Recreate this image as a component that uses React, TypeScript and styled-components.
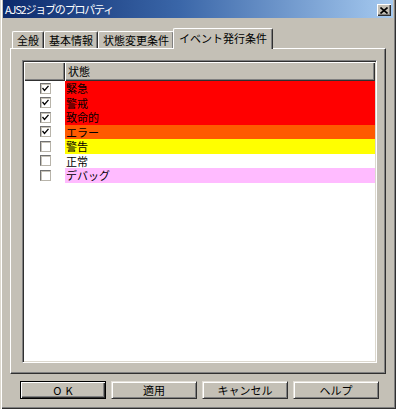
import styled, { createGlobalStyle } from "styled-components";

const GlobalStyle = createGlobalStyle`
    html, body {
        margin: 0;
        padding: 0;
        background: #c4c0b6;
    }
    * {
        box-sizing: border-box;
    }
`

const FONT = `"Noto Sans CJK JP", "Liberation Sans", sans-serif`

const Window = styled.div`
    width: 396px;
    height: 409px;
    background: #c4c0b6;
    display: flex;
    flex-direction: column;
    padding: 0 3px 3px 3px;
    box-shadow: inset 1px 0 0 #dcd8ce, inset 2px 0 0 #ffffff,
        inset -1px -1px 0 #303030, inset -2px -2px 0 #808080;
    font-family: ${FONT};
    color: #000;
`

const TitleBar = styled.div`
    height: 18px;
    display: flex;
    align-items: center;
    justify-content: space-between;
    padding: 0 2px 0 2px;
    background: linear-gradient(to right, #0c2a6c 0%, #3a66a8 45%, #a6caf0 100%);
`

const TitleText = styled.span`
    color: #fff;
    font-size: 11px;
    letter-spacing: -1.2px;
    line-height: 18px;
    white-space: nowrap;
`

const CloseButton = styled.div`
    width: 14px;
    height: 12px;
    margin-top: 2px;
    background: #c4c0b6;
    display: flex;
    align-items: center;
    justify-content: center;
    box-shadow: inset 1px 1px 0 #fff, inset -1px -1px 0 #303030, inset -2px -2px 0 #808080;
`

const Body = styled.div`
    flex: 1;
    display: flex;
    flex-direction: column;
    padding: 10px 7px 0 7px;
`

const TabStrip = styled.div`
    height: 20px;
    display: flex;
    align-items: flex-end;
    padding-left: 2px;
    position: relative;
    z-index: 1;
`

const Tab = styled.div<{ $active?: boolean }>`
    height: ${p => (p.$active ? "21px" : "17px")};
    margin: ${p => (p.$active ? "0 -1px -1px -1px" : "0")};
    padding: ${p => (p.$active ? "1px 5px 0 5px" : "0 4px")};
    font-size: 11px;
    line-height: 16px;
    white-space: nowrap;
    background: #c4c0b6;
    border-top: 1px solid #fff;
    border-left: 1px solid #fff;
    border-right: 1px solid #303030;
    border-radius: 2px 2px 0 0;
    box-shadow: inset -1px 0 0 #808080;
`

const Panel = styled.div`
    height: 326px;
    display: flex;
    flex-direction: column;
    padding: 11px 8px 10px 11px;
    border-top: 1px solid #fff;
    border-left: 1px solid #fff;
    border-right: 1px solid #303030;
    border-bottom: 1px solid #303030;
    box-shadow: inset -1px -1px 0 #808080;
`

const ListView = styled.div`
    flex: 1;
    background: #fff;
    border-top: 1px solid #808080;
    border-left: 1px solid #808080;
    border-right: 1px solid #fff;
    border-bottom: 1px solid #fff;
    box-shadow: inset 1px 1px 0 #303030, inset -1px -1px 0 #dcd8ce;
    padding: 1px 1px 0 1px;
    overflow: hidden;
`

const HeaderRow = styled.div`
    display: flex;
    height: 19px;
`

const HeaderCell = styled.div<{ $w?: number }>`
    ${p => (p.$w ? `width: ${p.$w}px;` : "flex: 1;")}
    height: 19px;
    background: #c4c0b6;
    font-size: 11px;
    line-height: 18px;
    padding-left: 3px;
    box-shadow: inset 1px 1px 0 #fff, inset -1px -1px 0 #303030, inset -2px -2px 0 #808080;
`

const Row = styled.div`
    display: flex;
    height: 14.5px;
`

const CheckCell = styled.div`
    width: 41px;
    display: flex;
    align-items: center;
    justify-content: center;
    padding-left: 1px;
`

const CheckBox = styled.div`
    width: 11px;
    height: 11px;
    background: #fff;
    border: 1px solid #707070;
    border-right-color: #b8b4aa;
    border-bottom-color: #b8b4aa;
    box-shadow: inset 1px 1px 0 #c8c4ba;
    display: flex;
    align-items: center;
    justify-content: center;
`

const StateCell = styled.div<{ $bg: string }>`
    flex: 1;
    background: ${p => p.$bg};
    font-size: 11px;
    line-height: 14.5px;
    padding-left: 1px;
    white-space: nowrap;
`

const ButtonRow = styled.div`
    display: flex;
    gap: 5px;
    padding-left: 10px;
    margin-top: 7px;
`

const Button = styled.div<{ $default?: boolean }>`
    width: 86px;
    height: 18px;
    display: flex;
    align-items: center;
    justify-content: center;
    font-size: 11px;
    letter-spacing: ${p => (p.$default ? "4px" : "0")};
    text-indent: ${p => (p.$default ? "4px" : "0")};
    background: #c4c0b6;
    border: 1px solid ${p => (p.$default ? "#000" : "transparent")};
    box-shadow: ${p =>
        p.$default
            ? "inset 1px 1px 0 #fff, inset -1px -1px 0 #303030, inset -2px -2px 0 #808080"
            : "inset 1px 1px 0 #fff, inset -1px -1px 0 #808080"};
    ${p => (!p.$default ? "border-right-color: #303030; border-bottom-color: #303030; border-top-color: #e4e0d8; border-left-color: #e4e0d8;" : "")}
`

const states = [
    { name: "緊急", color: "#ff0000", checked: true },
    { name: "警戒", color: "#ff0000", checked: true },
    { name: "致命的", color: "#ff0000", checked: true },
    { name: "エラー", color: "#ff5a00", checked: true },
    { name: "警告", color: "#ffff00", checked: false },
    { name: "正常", color: "#ffffff", checked: false },
    { name: "デバッグ", color: "#ffbbff", checked: false },
]

const tabs = ["全般", "基本情報", "状態変更条件", "イベント発行条件"]

const App = (): JSX.Element => {
    return (
        <>
            <GlobalStyle />
            <Window>
                <TitleBar>
                    <TitleText>AJS2ジョブのプロパティ</TitleText>
                    <CloseButton>
                        <svg width="8" height="7" viewBox="0 0 8 7">
                            <path d="M0.5 0.5 L7.5 6.5 M7.5 0.5 L0.5 6.5" stroke="#000" strokeWidth="1.6" />
                        </svg>
                    </CloseButton>
                </TitleBar>
                <Body>
                    <TabStrip>
                        {tabs.map((t, i) => (
                            <Tab key={t} $active={i === tabs.length - 1}>{t}</Tab>
                        ))}
                    </TabStrip>
                    <Panel>
                        <ListView>
                            <HeaderRow>
                                <HeaderCell $w={41} />
                                <HeaderCell>状態</HeaderCell>
                            </HeaderRow>
                            {states.map(s => (
                                <Row key={s.name}>
                                    <CheckCell>
                                        <CheckBox>
                                            {s.checked && (
                                                <svg width="7" height="7" viewBox="0 0 7 7">
                                                    <path d="M0.5 3 L2.5 5.5 L6.5 0.8" stroke="#000" strokeWidth="1.3" fill="none" />
                                                </svg>
                                            )}
                                        </CheckBox>
                                    </CheckCell>
                                    <StateCell $bg={s.color}>{s.name}</StateCell>
                                </Row>
                            ))}
                        </ListView>
                    </Panel>
                    <ButtonRow>
                        <Button $default>OK</Button>
                        <Button>適用</Button>
                        <Button>キャンセル</Button>
                        <Button>ヘルプ</Button>
                    </ButtonRow>
                </Body>
            </Window>
        </>
    )
}

export default App
